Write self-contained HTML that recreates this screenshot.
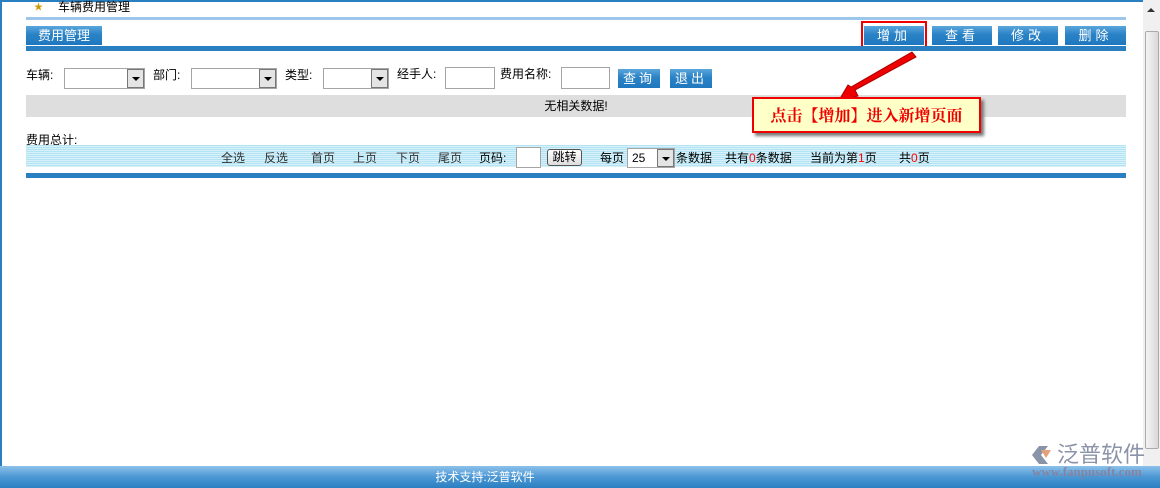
<!DOCTYPE html>
<html><head><meta charset="utf-8"><style>
*{margin:0;padding:0;box-sizing:border-box}
body{width:1160px;height:488px;position:relative;overflow:hidden;background:#fff;font-family:"Liberation Sans","Noto Sans CJK SC",sans-serif;font-size:12px;color:#000}
.a{position:absolute;white-space:nowrap}
.btn{position:absolute;background:linear-gradient(#5aa6dc,#2a82c6 45%,#1f78bf);color:#fff;text-align:center;font-size:13px;letter-spacing:4px;line-height:19px;height:19px;white-space:nowrap}
.sel{position:absolute;height:21px;border:1px solid #a5a5a5;background:#fff}
.sel i{position:absolute;right:0;top:0;width:17px;height:19px;background:#e4e4e4;border:1px solid #777}
.sel i:after{content:"";position:absolute;left:4px;top:7px;border-left:4px solid transparent;border-right:4px solid transparent;border-top:4px solid #000}
.inp{position:absolute;height:22px;border:1px solid #a5a5a5;background:#fff}
.lbl{position:absolute;font-size:12px;white-space:nowrap}
</style></head><body>
<div class="a" style="left:0;top:0;width:1143px;height:2px;background:#2a7fc0"></div>
<div class="a" style="left:0;top:0;width:2px;height:466px;background:#2a7fc0"></div>
<div class="a" style="left:34px;top:0;width:10px;height:8px;color:#c90;font-size:9px">★</div>
<div class="lbl" style="left:58px;top:-2px">车辆费用管理</div>
<div class="a" style="left:26px;top:17px;width:1100px;height:3px;background:#9dc7ea"></div>
<div class="btn" style="left:26px;top:26px;width:76px;letter-spacing:0">费用管理</div>
<div class="btn" style="left:864px;top:26px;width:60px">增加</div>
<div class="btn" style="left:932px;top:26px;width:60px">查看</div>
<div class="btn" style="left:998px;top:26px;width:60px">修改</div>
<div class="btn" style="left:1065px;top:26px;width:61px">删除</div>
<div class="a" style="left:861px;top:21px;width:66px;height:29px;border:2px solid #e00"></div>
<div class="a" style="left:26px;top:46px;width:1100px;height:5px;background:#2a7fc0"></div>
<div class="lbl" style="left:26px;top:66px">车辆:</div>
<div class="sel" style="left:64px;top:68px;width:81px"><i></i></div>
<div class="lbl" style="left:153px;top:66px">部门:</div>
<div class="sel" style="left:191px;top:68px;width:86px"><i></i></div>
<div class="lbl" style="left:285px;top:66px">类型:</div>
<div class="sel" style="left:323px;top:68px;width:66px"><i></i></div>
<div class="lbl" style="left:397px;top:65px">经手人:</div>
<div class="inp" style="left:445px;top:67px;width:50px"></div>
<div class="lbl" style="left:500px;top:65px">费用名称:</div>
<div class="inp" style="left:561px;top:67px;width:49px"></div>
<div class="btn" style="left:618px;top:69px;width:42px;letter-spacing:3px">查询</div>
<div class="btn" style="left:670px;top:69px;width:42px;letter-spacing:3px">退出</div>
<div class="a" style="left:26px;top:95px;width:1100px;height:22px;background:#dedede;text-align:center;line-height:22px;font-size:12px">无相关数据!</div>
<div class="lbl" style="left:26px;top:131px">费用总计:</div>
<div class="a" style="left:26px;top:145px;width:1100px;height:22px;background:repeating-linear-gradient(#b4e3f3 0 1px,#d6f1fa 1px 2px)"></div>
<div class="a" style="left:26px;top:150px;width:1100px;line-height:16px;font-size:12px;color:#333">
<span class="a" style="left:195px">全选</span><span class="a" style="left:238px">反选</span><span class="a" style="left:285px">首页</span><span class="a" style="left:327px">上页</span><span class="a" style="left:370px">下页</span><span class="a" style="left:412px">尾页</span><span class="a" style="left:453px;color:#000">页码:</span>
<span class="a" style="left:574px;color:#000">每页</span><span class="a" style="left:650px;color:#000">条数据</span><span class="a" style="left:699px;color:#000">共有<b style="color:red;font-weight:normal">0</b>条数据</span><span class="a" style="left:784px;color:#000">当前为第<b style="color:red;font-weight:normal">1</b>页</span><span class="a" style="left:873px;color:#000">共<b style="color:red;font-weight:normal">0</b>页</span></div>
<div class="inp" style="left:516px;top:147px;width:25px;height:21px"></div>
<div class="a" style="left:547px;top:149px;width:35px;height:17px;border:1px solid #555;border-radius:3px;background:linear-gradient(#fff,#ddd);text-align:center;line-height:15px">跳转</div>
<div class="sel" style="left:627px;top:148px;width:48px;height:20px;line-height:18px;padding-left:4px">25<i style="height:18px"></i></div>
<div class="a" style="left:26px;top:173px;width:1100px;height:5px;background:#2a7fc0"></div>
<svg class="a" style="left:820px;top:40px" width="120" height="70"><polygon points="92,12 96,17 35,50 38,56 18,62 28,45 31,47" fill="#e00" stroke="#a00" stroke-width="1"/></svg>
<div class="a" style="left:752px;top:97px;width:229px;height:36px;background:#ffffc8;border:2px solid #e00;box-shadow:3px 3px 3px #777;color:#e00;font-weight:bold;font-size:16px;line-height:32px;text-align:center;font-family:'Noto Serif CJK SC','Noto Sans CJK SC',serif">点击【增加】进入新增页面</div>
<div class="a" style="left:1143px;top:0;width:17px;height:466px;background:#f0f0f0"></div>
<div class="a" style="left:1145px;top:31px;width:14px;height:418px;background:linear-gradient(90deg,#f4f4f4,#d9d9d9);border:1px solid #aaa;border-radius:2px"></div>
<div class="a" style="left:1147px;top:8px;border-left:4px solid transparent;border-right:4px solid transparent;border-bottom:4px solid #333"></div>
<div class="a" style="left:0;top:466px;width:1160px;height:22px;background:linear-gradient(#8cc1ea,#4b97d4 50%,#2a7fc0)"></div>
<div class="a" style="left:0;top:467px;width:970px;text-align:center;color:#fff;line-height:20px">技术支持:泛普软件</div>
<svg class="a" style="left:1030px;top:444px" width="26" height="22"><path d="M2,11 L9,2 L18,2 L11,11 L18,20 L9,20 Z" fill="#8a94a8"/><path d="M11,6 L21,6 L16,14 Z" fill="#e6a07a"/></svg>
<div class="a" style="left:1057px;top:442px;font-size:22px;color:#8b93a8;line-height:26px;letter-spacing:0">泛普软件</div>
<div class="a" style="left:1032px;top:465px;font-size:13px;color:#8b7e98;font-family:'Liberation Serif',serif;font-weight:bold;opacity:.85;line-height:14px">www.fanpusoft.com</div>
</body></html>
